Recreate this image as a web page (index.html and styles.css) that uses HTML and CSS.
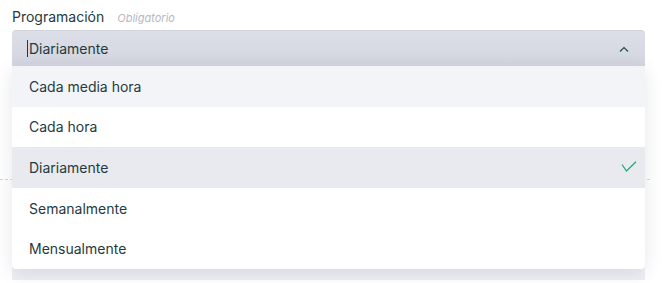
FILE: index.html
```html
<!DOCTYPE html>
<html lang="es">
<head>
<meta charset="utf-8">
<link rel="stylesheet" href="styles.css">
</head>
<body>
<div class="page">
  <div class="label-row">
    <span class="label">Programación</span>
    <span class="hint">Obligatorio</span>
  </div>
  <div class="select-wrap">
    <div class="select">
      <span class="caret"></span>
      <span class="value">Diariamente</span>
      <svg class="chev" width="10" height="6" viewBox="0 0 10 6"><path d="M1 5.5 L5 1.5 L9 5.5" fill="none" stroke="#2c4a52" stroke-width="1.2"/></svg>
    </div>
    <ul class="menu">
      <li class="item hover">Cada media hora</li>
      <li class="item">Cada hora</li>
      <li class="item selected">Diariamente
        <svg class="check" width="16" height="12" viewBox="0 0 16 12"><path d="M1 3.5 L5.5 10 L15 0.8" fill="none" stroke="#25a878" stroke-width="1.3"/></svg>
      </li>
      <li class="item">Semanalmente</li>
      <li class="item">Mensualmente</li>
    </ul>
  </div>
  <div class="below">
    <div class="dash"></div>
    <div class="next-field"></div>
  </div>
</div>
</body>
</html>
```
FILE: styles.css
```css
html, body {
  margin: 0;
  padding: 0;
  background: #ffffff;
}
body {
  font-family: Inter, "Noto Sans", sans-serif;
  color: #1f3a40;
  overflow: hidden;
  height: 283px;
}
.page {
  padding: 8px 17px 0 12px;
}
.label-row {
  display: flex;
  align-items: baseline;
  gap: 13px;
  height: 22px;
}
.label {
  font-size: 14px;
  color: #1f3a40;
}
.hint {
  font-size: 11px;
  font-style: italic;
  color: #b4b7c3;
}
.select-wrap {
  position: relative;
}
.select {
  height: 36px;
  display: flex;
  align-items: center;
  padding: 0 15px 0 15px;
  background: linear-gradient(#dcdee8, #d3d5df);
  border-top: 1px solid #d0d2dc;
  box-sizing: border-box;
  border-radius: 4px 4px 0 0;
  font-size: 14px;
}
.caret {
  width: 1px;
  height: 17px;
  background: #1f3a40;
  margin-right: 1px;
}
.value {
  flex: 1;
}
.chev {
  display: block;
  margin-right: 1px;
}
.menu {
  position: absolute;
  left: 0;
  right: 0;
  top: 100%;
  margin: 0;
  padding: 0;
  list-style: none;
  background: #ffffff;
  border-radius: 0 0 4px 4px;
  box-shadow: 0 4px 18px rgba(30, 40, 70, 0.11);
  z-index: 2;
  overflow: hidden;
}
.item {
  height: 40.6px;
  display: flex;
  align-items: center;
  justify-content: space-between;
  padding: 0 8px 0 17px;
  font-size: 14px;
  color: #1f3a40;
}
.item.hover {
  background: #f3f4f8;
}
.item.selected {
  background: #e9eaef;
}
.check {
  display: block;
}
.below {
  position: relative;
  margin-left: -12px;
  margin-right: -17px;
}
.dash {
  margin-top: 113px;
  width: 650px;
  border-top: 1px dashed #d6d8de;
}
.next-field {
  margin: 60px 17px 0 12px;
  height: 40px;
  background: #eeeff3;
}
```
